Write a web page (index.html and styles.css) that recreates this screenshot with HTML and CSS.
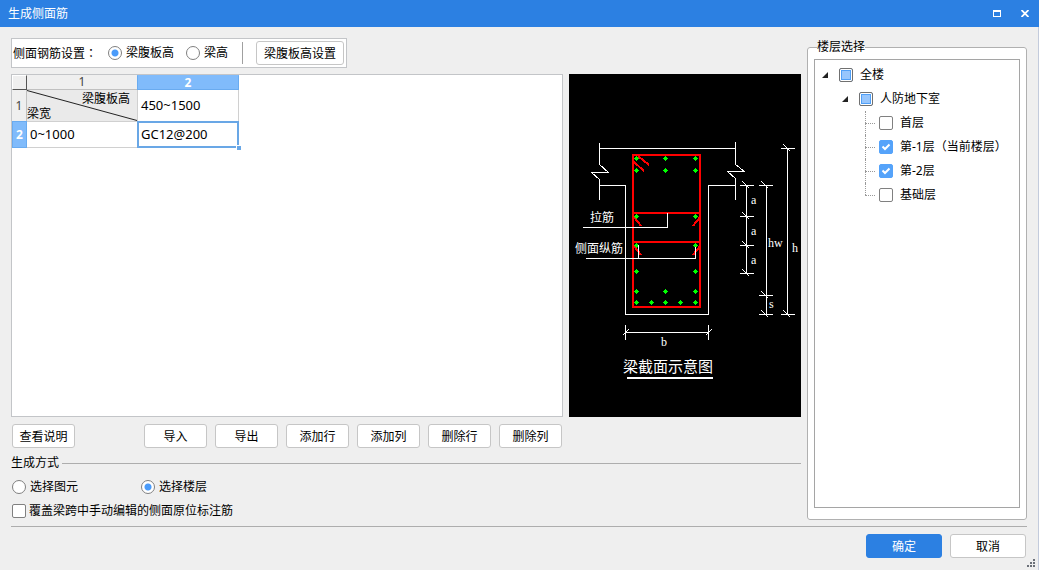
FILE: index.html
```html
<!DOCTYPE html>
<html lang="zh-CN">
<head>
<meta charset="utf-8">
<title>生成侧面筋</title>
<link rel="stylesheet" href="styles.css">
</head>
<body>
<div class="window">
  <header class="titlebar">
    <h1 class="title">生成侧面筋</h1>
    <button class="win-btn" type="button" aria-label="最大化">
      <svg width="8" height="7" viewBox="0 0 8 7" shape-rendering="crispEdges"><path fill-rule="evenodd" d="M0 0h8v7h-8zM1 2v4h6v-4z" fill="#fff"/></svg>
    </button>
    <button class="win-btn" type="button" aria-label="关闭">
      <svg width="8" height="7" viewBox="0 0 8 7"><path d="M0.500 0l7 7M7.500 0l-7 7" stroke="#fff" stroke-width="1.800" fill="none"/></svg>
    </button>
  </header>

  <main class="main">
    <section class="left">
      <div class="toolbar" role="radiogroup" aria-label="侧面钢筋设置">
        <span class="toolbar-label">侧面钢筋设置<span class="colon" lang="zh-TW">：</span></span>
        <label class="choice"><input class="radio" type="radio" name="basis" checked>梁腹板高</label>
        <label class="choice"><input class="radio" type="radio" name="basis">梁高</label>
        <span class="divider"></span>
        <button class="btn btn-wide" type="button">梁腹板高设置</button>
      </div>

      <div class="work">
        <div class="sheet">
          <table class="grid">
            <thead>
              <tr><th class="corner"></th><th class="col-head col-first">1</th><th class="col-head col-second active">2</th></tr>
            </thead>
            <tbody>
              <tr class="row-split">
                <th class="row-head">1</th>
                <td class="split">
                  <svg class="slash" viewBox="0 0 110 31" preserveAspectRatio="none"><path d="M0 0.500L110 30.500" stroke="#222" fill="none"/></svg>
                  <div class="split-text"><span class="split-top">梁腹板高</span><span class="split-bottom">梁宽</span></div>
                </td>
                <td class="cell cell-second">450~1500</td>
              </tr>
              <tr class="row-value">
                <th class="row-head active">2</th>
                <td class="cell cell-first">0~1000</td>
                <td class="cell cell-second selected">GC12@200<span class="handle"></span></td>
              </tr>
            </tbody>
          </table>
        </div>

        <svg class="diagram" viewBox="569 74 232 343" role="img" aria-label="梁截面示意图">
          <defs>
            <path id="bar" d="M2 0h1v1h1v1h1v1h-1v1h-1v1h-1v-1h-1v-1h-1v-1h1v-1h1z" fill="#0f0"/>
            <path id="tick" d="M-7 0h14M-4-4l7 7" stroke="#fff" fill="none"/>
          </defs>
          <g stroke="#fff" fill="none" shape-rendering="crispEdges">
            <path d="M599 148.500H735M599.500 143V164.500L608.500 172.500H591.500L599.500 179.500V200M735.500 142V164.500L744.500 171.500H727.500L735.500 178.500V200"/>
            <path d="M599 185.500H625.500V314.500H708.500V185.500H736"/>
            <path d="M746.500 185V274M766.500 185V315M787.500 148V315"/>
            <path d="M625.500 325V340M708.500 325V340M625 332.500H709M622.500 335.500l6-6M705.500 335.500l6-6"/>
          </g>
          <g stroke="#f00" stroke-width="2" fill="none" shape-rendering="crispEdges">
            <rect x="633" y="155" width="67" height="152"/>
            <path d="M633 213H700M633 242H700"/>
            <path d="M638 156l11 9M634 162l10 9M634 217l7 9M700 217l-7 9M634 246l7 9M700 246l-7 9"/>
          </g>
          <g shape-rendering="crispEdges">
            <use href="#bar" x="634" y="156"/><use href="#bar" x="663" y="156"/><use href="#bar" x="693" y="156"/>
            <use href="#bar" x="634" y="168"/><use href="#bar" x="663" y="168"/><use href="#bar" x="693" y="168"/>
            <use href="#bar" x="634" y="214"/><use href="#bar" x="693" y="214"/>
            <use href="#bar" x="634" y="243"/><use href="#bar" x="693" y="243"/>
            <use href="#bar" x="634" y="269"/><use href="#bar" x="693" y="269"/>
            <use href="#bar" x="634" y="289"/><use href="#bar" x="663" y="289"/><use href="#bar" x="693" y="289"/>
            <use href="#bar" x="634" y="300"/><use href="#bar" x="649" y="300"/><use href="#bar" x="663" y="300"/><use href="#bar" x="678" y="300"/><use href="#bar" x="693" y="300"/>
          </g>
          <g shape-rendering="crispEdges">
            <use href="#tick" x="746.500" y="185.500"/><use href="#tick" x="746.500" y="216.500"/><use href="#tick" x="746.500" y="245.500"/><use href="#tick" x="746.500" y="273.500"/>
            <use href="#tick" x="765.500" y="185.500"/><use href="#tick" x="765.500" y="295.500"/><use href="#tick" x="765.500" y="314.500"/>
            <use href="#tick" x="787.500" y="148.500"/><use href="#tick" x="787.500" y="314.500"/>
          </g>
          <g stroke="#fff" fill="none" shape-rendering="crispEdges">
            <path d="M583 227.500H667.500V213M586 258.500H695.500V247M638.500 258V245"/>
            <path d="M627 378H713" stroke-width="2"/>
          </g>
          <g class="cad-text">
            <text x="590" y="222">拉筋</text>
            <text x="575" y="253">侧面纵筋</text>
            <text class="cad-title" x="623" y="372">梁截面示意图</text>
          </g>
          <g class="cad-latin">
            <text x="751" y="204">a</text><text x="751" y="235">a</text><text x="751" y="264">a</text>
            <text x="768" y="247">hw</text><text x="792" y="252">h</text>
            <text x="769" y="308">s</text><text x="661" y="346">b</text>
          </g>
        </svg>
      </div>

      <div class="actions">
        <button class="btn" type="button">查看说明</button>
        <div class="action-group">
          <button class="btn" type="button">导入</button>
          <button class="btn" type="button">导出</button>
          <button class="btn" type="button">添加行</button>
          <button class="btn" type="button">添加列</button>
          <button class="btn" type="button">删除行</button>
          <button class="btn" type="button">删除列</button>
        </div>
      </div>

      <h2 class="section-title">生成方式</h2>
      <div class="modes">
        <label class="choice mode"><input class="radio" type="radio" name="mode">选择图元</label>
        <label class="choice mode"><input class="radio" type="radio" name="mode" checked>选择楼层</label>
      </div>
      <label class="choice override"><input class="check" type="checkbox">覆盖梁跨中手动编辑的侧面原位标注筋</label>
    </section>

    <fieldset class="floors">
      <legend class="floors-title">楼层选择</legend>
      <div class="tree">
        <div class="node level-0"><svg class="arrow" viewBox="0 0 6 6"><path d="M6 0v6H0z" fill="#222"/></svg><label class="node-label"><input class="check partial" type="checkbox" aria-checked="mixed">全楼</label></div>
        <div class="node level-1"><svg class="arrow" viewBox="0 0 6 6"><path d="M6 0v6H0z" fill="#222"/></svg><label class="node-label"><input class="check partial" type="checkbox" aria-checked="mixed">人防地下室</label></div>
        <div class="node leaf"><label class="node-label"><input class="check" type="checkbox">首层</label></div>
        <div class="node leaf"><label class="node-label"><input class="check" type="checkbox" checked>第-1层（当前楼层）</label></div>
        <div class="node leaf"><label class="node-label"><input class="check" type="checkbox" checked>第-2层</label></div>
        <div class="node leaf last"><label class="node-label"><input class="check" type="checkbox">基础层</label></div>
      </div>
    </fieldset>
  </main>

  <footer class="footer">
    <button class="btn btn-dialog btn-primary" type="button">确定</button>
    <button class="btn btn-dialog" type="button">取消</button>
  </footer>
  <svg class="grip" width="8" height="8" viewBox="0 0 8 8" shape-rendering="crispEdges"><path d="M6 0h2v2h-2zM3 3h2v2h-2zM6 3h2v2h-2zM0 6h2v2h-2zM3 6h2v2h-2zM6 6h2v2h-2z" fill="#6b7078"/></svg>
</div>
</body>
</html>
```
FILE: styles.css
```css
* {
  box-sizing: border-box;
}

body {
  margin: 0;
  color: #000;
  font: 12px/18px "Noto Sans", "Noto Sans CJK SC", sans-serif;
}

button,
input {
  margin: 0;
  font: inherit;
}

.window {
  position: relative;
  display: flex;
  flex-direction: column;
  min-height: 100vh;
  background: #efefef;
  border-right: 1px solid #c3cbdc;
}

.titlebar {
  display: flex;
  align-items: center;
  height: 27px;
  margin-right: -1px;
  padding: 0 0 0 8px;
  background: #2c80e2;
  color: #fff;
}

.title {
  flex: 1;
  margin: 0;
  font-size: 12px;
  font-weight: 400;
}

.win-btn {
  display: flex;
  align-items: center;
  justify-content: center;
  width: 28px;
  height: 27px;
  padding: 0;
  border: 0;
  background: none;
}

.main {
  display: flex;
  flex: 1;
  gap: 6px;
  padding: 11px 11px 0 11px;
}

.left {
  display: flex;
  flex: 1;
  flex-direction: column;
  gap: 6px;
  min-width: 0;
}

.toolbar {
  display: flex;
  align-items: center;
  align-self: flex-start;
  height: 30px;
  padding: 0 2px 0 1px;
  border: 1px solid #c3c5c8;
  background: #fff;
}

.toolbar .choice {
  margin-right: 12px;
}

.toolbar-label {
  margin-right: 11px;
}

.colon {
  font-family: "Noto Sans CJK TC", sans-serif;
}

.divider {
  width: 1px;
  height: 22px;
  margin: 0 13px 0 2px;
  background: #a0a0a0;
}

.choice {
  display: flex;
  align-items: center;
  gap: 4px;
  white-space: nowrap;
}

.radio,
.check {
  flex: none;
  width: 14px;
  height: 14px;
  border: 1px solid #808080;
  background: #fff center no-repeat;
  appearance: none;
}

.radio {
  border-radius: 50%;
}

.radio:checked {
  background-image: radial-gradient(circle, #4a9bfa 3px, #fff 4px);
}

.check {
  border-radius: 2px;
}

.check:checked {
  border-color: #55a3fa;
  background-color: #55a3fa;
  background-image: url("data:image/svg+xml,%3Csvg xmlns='http://www.w3.org/2000/svg' width='12' height='12'%3E%3Cpath d='M2.500 5.500l2.500 2.500 4.500-4.500' fill='none' stroke='%23fff' stroke-width='2'/%3E%3C/svg%3E");
}

.check.partial {
  border-color: #707070;
  background-color: #97c6fd;
  box-shadow: inset 0 0 0 1px #fff, inset 0 0 0 2px #4f9ff7;
}

.btn {
  width: 63px;
  height: 24px;
  padding: 1px 0 0;
  border: 1px solid #c6c6c6;
  border-radius: 3px;
  background: #fff;
  color: #000;
  line-height: 18px;
  white-space: nowrap;
}

.btn-wide {
  width: 88px;
}

.work {
  display: flex;
  flex: 1;
  gap: 6px;
}

.sheet {
  flex: 1;
  border: 1px solid #c3c5c8;
  background: #fff;
}

.grid {
  border-collapse: separate;
  border-spacing: 0;
  table-layout: fixed;
  width: 227px;
}

.grid th,
.grid td {
  padding: 0;
  font-weight: 400;
}

.grid .corner {
  width: 15px;
  height: 15px;
  border: 1px solid #fff;
  border-right-color: #555;
  border-bottom-color: #555;
  background: #efefef;
}

.col-head {
  border-bottom: 1px solid #c0c0c0;
  background: #efefef;
  color: #444;
  line-height: 14px;
}

.col-first {
  width: 110px;
}

.col-second {
  width: 102px;
}

.row-head {
  border-right: 1px solid #c0c0c0;
  background: #efefef;
  color: #444;
}

.grid .active {
  border: 1px solid #69abf0;
  background: #80bbfb;
  color: #fff;
  font-weight: 700;
}

.grid .col-head.active {
  border-top-color: #80bbfb;
  line-height: 13px;
}

.row-split {
  height: 31px;
}

.row-value {
  height: 27px;
}

.split {
  position: relative;
  background: #eaeaea;
}

.slash {
  position: absolute;
  inset: 0;
  width: 100%;
  height: 100%;
}

.split-text {
  position: relative;
  display: flex;
  flex-direction: column;
  line-height: 15px;
}

.split-top {
  align-self: flex-end;
  padding-right: 7px;
}

.cell {
  border-top: 1px solid #d0d0d0;
  border-bottom: 1px solid #d0d0d0;
  font-size: 13px;
  line-height: 17px;
}

.row-split .cell {
  border-top: 0;
  border-bottom: 0;
}

.grid .cell-first {
  padding-left: 3px;
}

.grid .cell-second {
  padding-left: 3px;
  border-right: 1px solid #d0d0d0;
  border-left: 1px solid #d0d0d0;
}

.grid .selected {
  position: relative;
  padding-left: 2px;
  border: 2px solid #69a7e6;
}

.handle {
  position: absolute;
  right: -5px;
  bottom: -5px;
  width: 6px;
  height: 6px;
  border: 1px solid #fff;
  background: #69a7e6;
}

.diagram {
  flex: none;
  align-self: flex-start;
  width: 232px;
  background: #000;
}

.cad-text {
  fill: #fff;
  font-family: "Noto Sans CJK SC", sans-serif;
  font-size: 12px;
}

.cad-title {
  font-size: 15px;
}

.cad-latin {
  fill: #fff;
  font-family: "Liberation Serif", serif;
  font-size: 12px;
}

.actions {
  display: flex;
  gap: 8px;
  justify-content: space-between;
  padding: 1px 239px 0 1px;
}

.action-group {
  display: flex;
  gap: 8px;
}

.section-title {
  display: flex;
  align-items: center;
  gap: 3px;
  margin: 0;
  font-size: 12px;
  font-weight: 400;
}

.section-title::after {
  flex: 1;
  height: 1px;
  background: #adadad;
  content: "";
}

.modes {
  display: flex;
  padding-left: 1px;
}

.mode {
  width: 129px;
}

.override {
  align-self: flex-start;
  gap: 3px;
  padding-left: 1px;
}

.floors {
  display: flex;
  flex: none;
  flex-direction: column;
  width: 220px;
  margin: 0;
  padding: 3px 6px 11px;
  border: 1px solid #b0b0b0;
  border-radius: 3px;
  background: #fff;
}

.floors-title {
  margin-left: 3px;
  padding: 0;
}

.tree {
  flex: 1;
  height: 100%;
  padding: 3px 0 0 7px;
  border: 1px solid #a5a5a5;
}

.node {
  display: flex;
  align-items: center;
  height: 24px;
}

.node-label {
  display: flex;
  align-items: center;
  gap: 7px;
  white-space: nowrap;
}

.arrow {
  width: 6px;
  height: 6px;
  margin-right: 11px;
}

.level-1 {
  padding-left: 20px;
}

.leaf {
  position: relative;
  padding-left: 57px;
}

.leaf::before {
  position: absolute;
  top: 0;
  left: 43px;
  height: 100%;
  border-left: 1px dotted #999;
  content: "";
}

.leaf::after {
  position: absolute;
  top: 12px;
  left: 43px;
  width: 10px;
  border-top: 1px dotted #999;
  content: "";
}

.leaf.last::before {
  height: 50%;
}

.footer {
  display: flex;
  gap: 8px;
  justify-content: flex-end;
  margin: 6px 11px 0;
  padding: 7px 1px 12px;
  border-top: 1px solid #adadad;
}

.btn-dialog {
  width: 76px;
}

.btn-primary {
  border-color: #2c80e2;
  background: #2c80e2;
  color: #fff;
}

.grip {
  position: absolute;
  right: 3px;
  bottom: 3px;
}
```
